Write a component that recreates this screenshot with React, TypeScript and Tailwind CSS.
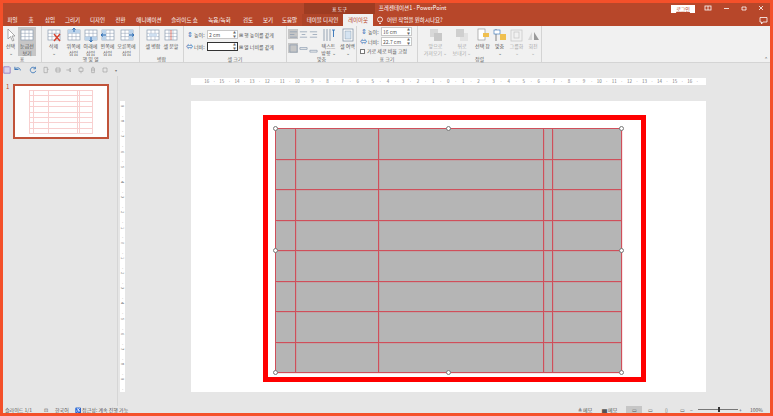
import React from "react";

const font = "font-['Noto_Sans_CJK_KR','Noto_Sans',sans-serif]";

const tabs: [string, number][] = [
  ["파일", 19], ["홈", 18], ["삽입", 20], ["그리기", 25], ["디자인", 25], ["전환", 21],
  ["애니메이션", 36], ["슬라이드 쇼", 35], ["녹음/녹화", 35], ["검토", 22], ["보기", 18], ["도움말", 25],
];

function TableIcon({ kind = "plain", size = 14 }: { kind?: string; size?: number }) {
  return (
    <svg width={size} height={size} viewBox="0 0 14 14" className="block">
      <rect x="1" y="2" width="12" height="10" fill="#fff" stroke="#8a9bb0" strokeWidth="0.7" />
      <path d="M1 5.3H13M1 8.6H13M5 2V12M9 2V12" stroke="#8a9bb0" strokeWidth="0.5" fill="none" />
      {kind === "up" && <><rect x="1" y="2" width="12" height="3.3" fill="#bcd3ea" /><path d="M7 0V4M5.5 1.8L7 0L8.5 1.8" stroke="#2f6fb5" strokeWidth="1" fill="none" /></>}
      {kind === "down" && <><rect x="1" y="8.6" width="12" height="3.4" fill="#bcd3ea" /><path d="M7 9V14M5.5 12L7 14L8.5 12" stroke="#2f6fb5" strokeWidth="1" fill="none" /></>}
      {kind === "left" && <><rect x="1" y="2" width="4" height="10" fill="#bcd3ea" /><path d="M0 7H5M2 5.5L0 7L2 8.5" stroke="#2f6fb5" strokeWidth="1" fill="none" /></>}
      {kind === "right" && <><rect x="9" y="2" width="4" height="10" fill="#bcd3ea" /><path d="M9 7H14M12 5.5L14 7L12 8.5" stroke="#2f6fb5" strokeWidth="1" fill="none" /></>}
      {kind === "del" && <path d="M7 6L13 13M13 6L7 13" stroke="#d8402c" strokeWidth="1.4" fill="none" />}
      {kind === "merge" && <rect x="3" y="5.5" width="8" height="3" fill="#cfe0f1" />}
      {kind === "split" && <path d="M7 2V12" stroke="#d8402c" strokeWidth="0.7" />}
    </svg>
  );
}

function Big({ w, lines, icon, dim, active }: { w: number; lines: string[]; icon: React.ReactNode; dim?: boolean; active?: boolean }) {
  return (
    <div
      style={{ width: w }}
      className={`flex h-[29px] shrink-0 flex-col items-center pt-[1px] text-[5px] leading-[7px] ${dim ? "text-[#a8a8a8]" : "text-[#555]"} ${active ? "bg-[#c6c6c6]" : ""}`}
    >
      <div className="flex h-[14px] items-center">{icon}</div>
      {lines.map((l) => (
        <span key={l} className="whitespace-nowrap">{l}</span>
      ))}
    </div>
  );
}

function Group({ w, label, children }: { w: number; label: string; children: React.ReactNode }) {
  return (
    <div style={{ width: w }} className="flex h-full shrink-0 flex-col border-r border-[#d4d4d4]">
      <div className="flex h-[30px] items-start pt-[1px]">{children}</div>
      <div className="text-center text-[5px] leading-[6px] text-[#666]">{label}</div>
    </div>
  );
}

function SizeField({ icon, label, value, focus }: { icon: string; label: string; value: string; focus?: boolean }) {
  return (
    <div className="flex h-[9px] items-center gap-[1px] text-[5px] text-[#555]">
      <span className="w-[7px] text-center text-[7px] leading-[7px] text-[#2f6fb5]">{icon}</span>
      <span className="w-[12px] whitespace-nowrap">{label}</span>
      <div className={`flex h-[9px] w-[31px] items-center justify-between bg-white px-[1px] ${focus ? "border border-[#333]" : "border border-[#c8c8c8]"}`}>
        <span>{value}</span>
        <span className="text-[3px] leading-[4px] text-[#666]">▲<br />▼</span>
      </div>
    </div>
  );
}

function Handle({ className }: { className: string }) {
  return <div className={`absolute h-[5px] w-[5px] rounded-full border border-[#777] bg-white ${className}`} />;
}

const cells = Array.from({ length: 40 });
const hNums = Array.from({ length: 33 }, (_, i) => Math.abs(16 - i));
const vNums = Array.from({ length: 19 }, (_, i) => Math.abs(9 - i));
const qat = ["M3 2H8V10H3ZM8 5H10", "M3 3H9V9H3ZM2 6H10", "M2 6H6M8 3V9M6 6L8 3M6 6L8 9", "M3 3H9V8H3ZM6 8V11M6 1V3", "M4 3H8V10H4ZM3 6H9M6 1V3", "M3 3H9V9H3Z"];

export default function App() {
  return (
    <div className={`${font} flex h-[416px] w-[773px] flex-col overflow-hidden border-[3px] border-[#f4502a] bg-[#e6e6e6]`}>
      {/* title bar */}
      <div className="flex h-[11px] shrink-0 items-center bg-[#b7472a] text-[5px] text-white">
        <div className="ml-[301px] flex h-full w-[71px] items-center justify-center bg-[#9e3c22]">표 도구</div>
        <div className="ml-[4px] w-[293px] whitespace-nowrap text-[5.5px]">프레젠테이션1 - PowerPoint</div>
        <div className="flex h-[8px] w-[24px] items-center justify-center bg-white text-[#b7472a] underline">로그인</div>
        <svg width="75" height="9" viewBox="0 0 75 9" className="shrink-0">
          <rect x="10" y="2" width="6" height="4" fill="none" stroke="#fff" strokeWidth="0.8" />
          <path d="M13 2V6M29 4.5H34M47 3H51V6H47ZM64 2L68 6M68 2L64 6" stroke="#fff" strokeWidth="0.8" fill="none" />
        </svg>
      </div>
      {/* tabs */}
      <div className="flex h-[12px] shrink-0 items-center bg-[#b7472a] text-[5.5px] text-white">
        {tabs.map(([t, w]) => (
          <div key={t} style={{ width: w }} className="shrink-0 whitespace-nowrap text-center">{t}</div>
        ))}
        <div className="flex h-full w-[71px] shrink-0 bg-[#ad4327]">
          <div className="w-[41px] whitespace-nowrap pt-[2px] text-center">테이블 디자인</div>
          <div className="flex h-full w-[30px] items-center justify-center bg-[#f1f1f1] text-[#b7472a]">레이아웃</div>
        </div>
        <svg width="10" height="9" viewBox="0 0 10 9" className="ml-[2px] shrink-0">
          <circle cx="5" cy="3.5" r="2.5" fill="none" stroke="#fff" strokeWidth="0.8" />
          <path d="M4 7.5H6" stroke="#fff" strokeWidth="0.8" />
        </svg>
        <div className="ml-[2px] w-[367px] whitespace-nowrap">어떤 작업을 원하시나요?</div>
        <svg width="9" height="9" viewBox="0 0 9 9" className="ml-[5px] shrink-0">
          <path d="M1 1.5H8V6H4L2.5 8V6H1Z" fill="none" stroke="#fff" strokeWidth="0.8" />
        </svg>
      </div>
      {/* ribbon */}
      <div className="flex h-[37px] shrink-0 border-b border-[#d4d4d4] bg-[#f1f1f1]">
        <Group w={39} label="표">
          <Big w={15} lines={["선택", "⌄"]} icon={<svg width="12" height="14" viewBox="0 0 12 14"><path d="M3 1V11L5.5 8.5L7.5 13L9 12.3L7 8H10Z" fill="#fff" stroke="#888" strokeWidth="0.7" /></svg>} />
          <Big w={18} active lines={["눈금선", "보기"]} icon={<TableIcon />} />
        </Group>
        <Group w={98} label="행 및 열">
          <div className="w-[4px]" />
          <Big w={15} lines={["삭제", "⌄"]} icon={<TableIcon kind="del" />} />
          <div className="w-[4px]" />
          <Big w={17} lines={["위쪽에", "삽입"]} icon={<TableIcon kind="up" />} />
          <Big w={17} lines={["아래에", "삽입"]} icon={<TableIcon kind="down" />} />
          <Big w={17} lines={["왼쪽에", "삽입"]} icon={<TableIcon kind="left" />} />
          <Big w={21} lines={["오른쪽에", "삽입"]} icon={<TableIcon kind="right" />} />
        </Group>
        <Group w={44} label="병합">
          <div className="w-[4px]" />
          <Big w={18} lines={["셀 병합"]} icon={<TableIcon kind="merge" />} />
          <Big w={18} lines={["셀 분할"]} icon={<TableIcon kind="split" />} />
        </Group>
        <Group w={103} label="셀 크기">
          <div className="flex flex-col gap-[3px] pl-[2px] pt-[3px]">
            <SizeField icon="⇕" label="높이:" value="2 cm" />
            <SizeField icon="⇔" label="너비:" value="" focus />
          </div>
          <div className="flex flex-col gap-[3px] pl-[1px] pt-[3px] text-[5px] leading-[9px] text-[#555]">
            <span className="whitespace-nowrap">⊞ 행 높이를 같게</span>
            <span className="whitespace-nowrap">⊞ 열 너비를 같게</span>
          </div>
        </Group>
        <Group w={70} label="맞춤">
          <div className="grid grid-cols-3 gap-x-[1px] gap-y-[4px] pl-[1px] pt-[2px]">
            {["M1 2H9M1 5H6M1 8H9", "M1 2H9M3 5H7M1 8H9", "M1 2H9M4 5H9M1 8H9", "M1 1H9V9H1Z", "M1 4H9V6H1Z", "M1 7H9V9H1Z"].map((d, i) => (
              <div key={d} className={`flex h-[10px] w-[10px] items-center justify-center ${i === 0 || i === 3 ? "bg-[#c6c6c6]" : ""}`}>
                <svg width="9" height="9" viewBox="0 0 10 10"><path d={d} stroke="#8a9bb0" strokeWidth="0.8" fill="none" /></svg>
              </div>
            ))}
          </div>
          <Big w={21} lines={["텍스트", "방향 ⌄"]} icon={<svg width="14" height="14" viewBox="0 0 14 14"><path d="M2 1V13M5 1V13M8 1V13" stroke="#71859b" strokeWidth="0.7" /><path d="M10 2H13M11.5 2V9" stroke="#2f6fb5" strokeWidth="0.9" /></svg>} />
          <Big w={17} lines={["셀 여백", "⌄"]} icon={<svg width="12" height="14" viewBox="0 0 12 14"><rect x="1" y="1" width="10" height="12" fill="#fff" stroke="#71859b" strokeWidth="0.7" /><rect x="3" y="3" width="6" height="8" fill="#d5e3f1" stroke="#71859b" strokeWidth="0.4" /></svg>} />
        </Group>
        <Group w={61} label="표 크기">
          <div className="flex flex-col gap-[1px] pl-[3px]">
            <SizeField icon="⇕" label="높이:" value="16 cm" />
            <SizeField icon="⇔" label="너비:" value="22.7 cm" />
            <div className="flex h-[8px] items-center gap-[2px] whitespace-nowrap text-[5px] text-[#555]">
              <span className="h-[5px] w-[5px] border border-[#777] bg-white" />
              가로 세로 비율 고정
            </div>
          </div>
        </Group>
        <Group w={124} label="정렬">
          <div className="w-[3px]" />
          <Big w={29} dim lines={["앞으로", "가져오기 ⌄"]} icon={<svg width="14" height="14" viewBox="0 0 14 14"><rect x="1" y="1" width="8" height="8" fill="#d8d8d8" /><rect x="5" y="5" width="8" height="8" fill="#c8c8c8" /></svg>} />
          <Big w={24} dim lines={["뒤로", "보내기 ⌄"]} icon={<svg width="14" height="14" viewBox="0 0 14 14"><rect x="5" y="5" width="8" height="8" fill="#e2e2e2" /><rect x="1" y="1" width="8" height="8" fill="#cfcfcf" /></svg>} />
          <Big w={17} lines={["선택 창"]} icon={<svg width="14" height="14" viewBox="0 0 14 14"><rect x="2" y="1" width="7" height="11" fill="#fff" stroke="#888" strokeWidth="0.6" /><path d="M7 5H13V9H7Z" fill="#f0c050" /></svg>} />
          <Big w={17} lines={["맞춤", "⌄"]} icon={<svg width="14" height="14" viewBox="0 0 14 14"><path d="M3 1V13" stroke="#555" strokeWidth="0.7" /><rect x="1" y="2" width="6" height="4" fill="#fff" stroke="#2f6fb5" strokeWidth="0.6" /><rect x="7" y="6" width="6" height="6" fill="#f0c050" /></svg>} />
          <Big w={17} dim lines={["그룹화", "⌄"]} icon={<svg width="13" height="13" viewBox="0 0 13 13"><rect x="1" y="1" width="11" height="11" fill="none" stroke="#c4c4c4" strokeWidth="0.7" /><rect x="4" y="3" width="5" height="6" fill="none" stroke="#c4c4c4" strokeWidth="0.7" /></svg>} />
          <Big w={16} dim lines={["회전", "⌄"]} icon={<svg width="13" height="13" viewBox="0 0 13 13"><path d="M7 3L12 11H7Z" fill="#9a9a9a" /><path d="M5 3L1 11H5Z" fill="#d8d8d8" /></svg>} />
        </Group>
        <div className="relative flex-1">
          <span className="absolute bottom-0 right-[2px] text-[5px] leading-[6px] text-[#555]">⌃</span>
        </div>
      </div>
      {/* quick access */}
      <div className="flex h-[13px] shrink-0 items-center">
        <div className="flex w-[7px] justify-center">
          <svg width="8" height="8" viewBox="0 0 10 10" className="shrink-0"><path d="M1 1H8L9 2V9H1Z" fill="#d9d4ec" stroke="#7b5fb5" strokeWidth="0.8" /></svg>
        </div>
        <div className="flex w-[16px] justify-center">
          <svg width="11" height="9" viewBox="0 0 12 10"><path d="M2 2V5H6M2 5C4 2 8 3 8 6" fill="none" stroke="#2f6fb5" strokeWidth="1" /></svg>
        </div>
        <div className="flex w-[14px] justify-center">
          <svg width="8" height="8" viewBox="0 0 10 10"><path d="M8 3A3.5 3.5 0 1 0 8.5 6M8 1V3.5H5.5" fill="none" stroke="#2f6fb5" strokeWidth="1" /></svg>
        </div>
        {qat.map((d, i) => (
          <div key={i} className="flex w-[11.8px] justify-center">
            <svg width="8" height="8" viewBox="0 0 12 12"><path d={d} fill="none" stroke="#9a9a9a" strokeWidth="0.9" /></svg>
          </div>
        ))}
        <span className="ml-[4px] text-[4px] text-[#777]">▾</span>
      </div>
      {/* work area */}
      <div className="flex min-h-0 flex-1">
        <div className="flex w-[115px] shrink-0 border-r border-[#d6d6d6] pl-[3px] pt-[8px]">
          <span className="w-[7px] text-[6px] leading-[6px] text-[#b7472a]">1</span>
          <div className="h-[55px] w-[96px] border-2 border-[#c0533a] bg-white pl-[14px] pt-[4px]">
            <div className="grid h-[44px] w-[64px] grid-cols-[3px_14px_28px_1px_1fr] grid-rows-8 gap-[1px] bg-[#f8d0d0] p-[1px]">
              {cells.map((_, i) => (
                <div key={i} className="bg-white" />
              ))}
            </div>
          </div>
        </div>
        <div className="min-w-0 flex-1">
          <div className="ml-[73px] mt-[2px] flex h-[7px] w-[515px] items-center bg-white pl-[12px] text-[4.5px] leading-[7px] text-[#777]">
            {hNums.map((n, i) => (
              <div key={i} className="flex w-[15.1px] shrink-0">
                <span className="w-[7.55px] text-center">{n}</span>
                <span className="w-[7.55px] text-center">·</span>
              </div>
            ))}
          </div>
          <div className="ml-[2px] mt-[16px] flex">
            <div className="flex h-[291px] w-[5px] flex-col items-center overflow-hidden bg-white pt-[4px] text-[4px] leading-[5px] text-[#777]">
              {vNums.map((n, i) => (
                <div key={i} className="flex h-[15.2px] shrink-0 flex-col items-center">
                  <span className="flex h-[7.6px] items-center [writing-mode:vertical-rl]">{n}</span>
                  <span className="flex h-[7.6px] items-center">·</span>
                </div>
              ))}
            </div>
            <div className="ml-[66px] h-[291px] w-[515px] bg-white pl-[72px] pt-[14px]">
              <div className="h-[267px] w-[383px] border-[5px] border-[#ff0000] pl-[7px] pt-[8px]">
                <div className="relative h-[245px] w-[347px]">
                  <div className="grid h-full w-full grid-cols-[20px_83px_165px_9px_69px] grid-rows-[31px_30px_31px_30px_31px_30px_31px_30px] border-l border-t border-[#cf4f5a] bg-[#b5b5b5]">
                    {cells.map((_, i) => (
                      <div key={i} className="border-b border-r border-[#cf4f5a] shadow-[1px_1px_0_rgba(220,70,80,0.15)]" />
                    ))}
                  </div>
                  <Handle className="left-[-2px] top-[-2px]" />
                  <Handle className="left-[171px] top-[-2px]" />
                  <Handle className="right-[-2px] top-[-2px]" />
                  <Handle className="left-[-2px] top-[120px]" />
                  <Handle className="right-[-2px] top-[120px]" />
                  <Handle className="bottom-[-2px] left-[-2px]" />
                  <Handle className="bottom-[-2px] left-[171px]" />
                  <Handle className="bottom-[-2px] right-[-2px]" />
                </div>
              </div>
            </div>
          </div>
        </div>
      </div>
      {/* status bar */}
      <div className="flex h-[7px] shrink-0 items-center bg-[#e6e6e6] text-[5px] leading-[7px] text-[#555]">
        <span className="ml-[2px] w-[39px] whitespace-nowrap">슬라이드 1/1</span>
        <span className="w-[11px]">⊡</span>
        <span className="w-[20px] whitespace-nowrap">한국어</span>
        <span className="w-[503px] whitespace-nowrap">♿ 접근성: 계속 진행 가능</span>
        <span className="w-[24px] whitespace-nowrap">≜ 메모</span>
        <span className="w-[24px] whitespace-nowrap">▆ 메모</span>
        <div className="flex h-full w-[16px] items-center justify-center bg-[#c6c6c6]">▭</div>
        <span className="w-[16px] text-center">▭</span>
        <span className="w-[16px] text-center">▯</span>
        <span className="w-[16px] text-center">▭</span>
        <span className="w-[8px]">−</span>
        <div className="relative h-[1px] w-[40px] bg-[#777]">
          <div className="absolute left-[20px] top-[-2px] h-[5px] w-[2px] bg-[#333]" />
        </div>
        <span className="ml-[1px] w-[11px]">+</span>
        <span className="whitespace-nowrap">100%</span>
      </div>
    </div>
  );
}
